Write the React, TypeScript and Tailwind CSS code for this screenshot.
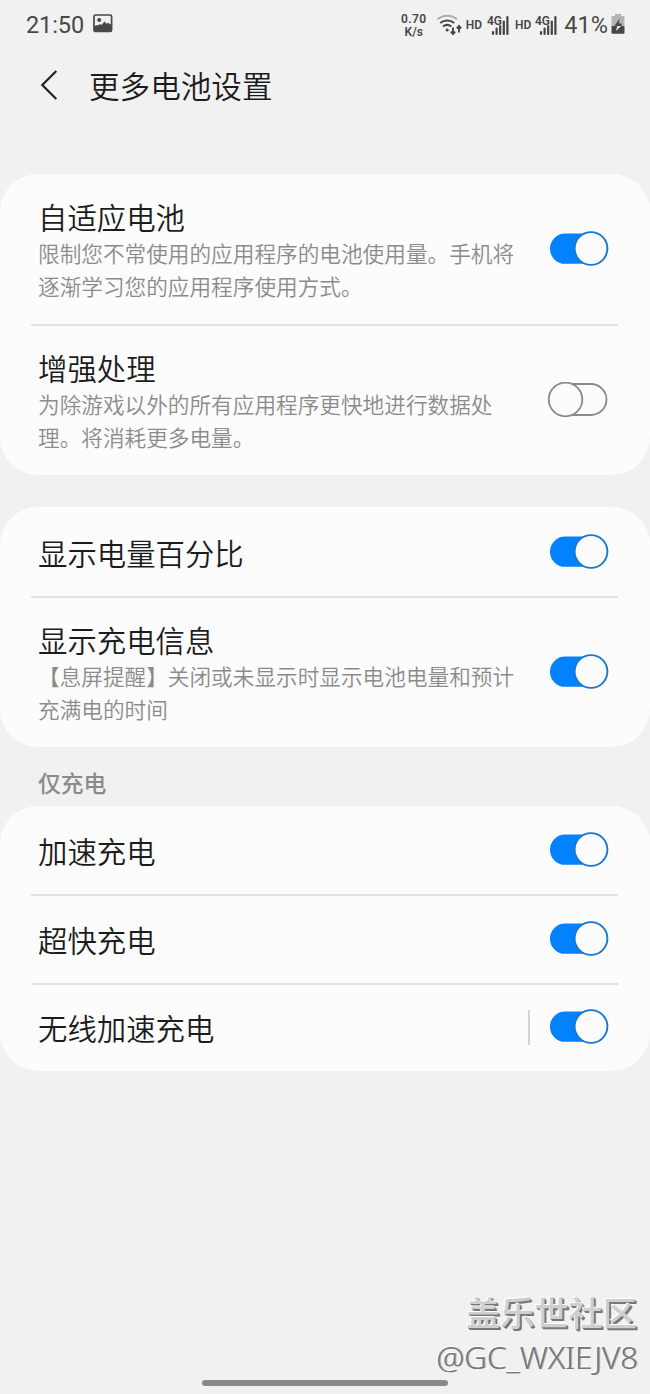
import clsx from "clsx";

interface ToggleProps {
    on: boolean;
}

interface RowProps {
    title: string;
    lines?: string[];
    on: boolean;
    className: string;
    split?: boolean;
}

function Toggle({ on }: ToggleProps) {
    return (
        <svg width="62" height="36" viewBox="0 0 62 36" className="shrink-0" role="switch" aria-checked={on}>
            {on ? (
                <>
                    <rect x="3" y="2.5" width="56" height="30.3" rx="15.1" fill="#0381fe" />
                    <circle cx="44" cy="17.5" r="16.4" fill="#fcfcfc" stroke="#1b78cc" strokeWidth="1.9" />
                </>
            ) : (
                <>
                    <rect x="4" y="2" width="55.5" height="31" rx="15.5" fill="#fcfcfc" stroke="#8a8a8a" strokeWidth="1.8" />
                    <circle cx="18.5" cy="17.5" r="16.8" fill="#fcfcfc" stroke="#8a8a8a" strokeWidth="1.8" />
                </>
            )}
        </svg>
    )
}

function Row({ title, lines, on, className, split }: RowProps) {
    return (
        <div className={clsx("flex items-center justify-between pl-[38px] pr-[41px]", className)}>
            <div>
                <h2 className="text-[29.4px] leading-10 text-[#1c1c1c]">{title}</h2>
                {lines && (
                    <p className="whitespace-nowrap text-[21.65px] leading-[33px] text-[#8b8b8b]">
                        {lines.map((line) => (
                            <span key={line} className="block">{line}</span>
                        ))}
                    </p>
                )}
            </div>
            <div className="flex items-center gap-[17px]">
                {split && <div className="h-[35px] w-[2px] bg-[#d4d4d4]" />}
                <Toggle on={on} />
            </div>
        </div>
    )
}

function Divider() {
    return <div className="ml-[31px] mr-8 h-[2px] shrink-0 bg-[#e2e2e2]" />
}

function Signal() {
    return (
        <svg width="23" height="24" viewBox="0 0 23 24" className="shrink-0">
            <text x="0" y="11.5" fontFamily="Roboto" fontWeight="600" fontSize="12" textLength="15" fill="#444">4G</text>
            <path d="M6 19v2M9.6 15.500v5.500M13.200 13v8M16.800 8.500v12.500M20.400 4v17" stroke="#444" strokeWidth="2.200" strokeLinecap="round" />
        </svg>
    )
}

function StatusBar() {
    return (
        <div className="flex h-[50px] items-center justify-between pl-[26px] pr-[25px] font-[Roboto] font-normal text-[#484848]">
            <div className="flex items-center">
                <span className="mt-[2px] text-[23.5px] leading-none tracking-[-0.1px]">21:50</span>
                <svg width="20" height="19" viewBox="0 0 20 19" className="ml-[9px] -mt-[3px]">
                    <rect x="1" y="1" width="17.6" height="16.5" rx="1.6" fill="none" stroke="#484848" strokeWidth="1.7" />
                    <circle cx="6.200" cy="6" r="2" fill="#484848" />
                    <path d="M1 12.500l2.500-1.500 1.500 .5 1.800-1.500 1.700 1 3-3.500 2 2.200 1.500-1L18.600 11v6.500H1z" fill="#484848" />
                </svg>
            </div>
            <div className="flex items-center">
                <div className="w-[26px] text-center text-[12px] font-semibold leading-none">
                    <div className="pb-px tracking-[0.4px]">0.70</div>
                    <div className="-mt-px pt-px">K/s</div>
                </div>
                <svg width="26" height="22" viewBox="0 0 26 22" fill="none" stroke="#484848" className="ml-[9px]">
                    <path d="M1.500 5.300a15 15 0 0 1 19.500 0" stroke="#adadad" strokeWidth="2" />
                    <path d="M4.200 9a10.700 10.700 0 0 1 14 0M7 12.500a6.800 6.800 0 0 1 8.400 0" strokeWidth="2" />
                    <circle cx="11.200" cy="16" r="1.500" fill="#484848" stroke="none" />
                    <path d="M17 13.500V20M14.800 17.600l2.200 2.400 2.200-2.400M23 18.500V12M20.800 14.400L23 12l2.200 2.400" strokeWidth="1.900" />
                </svg>
                <span className="ml-[4px] -mt-[1px] text-[12px] font-semibold">HD</span>
                <div className="ml-[5px]"><Signal /></div>
                <span className="ml-[5px] -mt-[1px] text-[12px] font-semibold">HD</span>
                <div className="ml-[4px]"><Signal /></div>
                <span className="ml-[6px] mt-px text-[23.500px] leading-none">41%</span>
                <svg width="14" height="20" viewBox="0 0 14 20" className="ml-[3px] -mt-[2px]">
                    <path d="M4 0h6v2h2.200c.8 0 1.300.5 1.300 1.300V12H.5V3.300C.5 2.500 1 2 1.800 2H4z" fill="#b4b4b4" />
                    <path d="M.5 12h13v6.500c0 .8-.5 1.300-1.300 1.300H1.800c-.8 0-1.300-.5-1.300-1.300z" fill="#484848" />
                    <path d="M8.500 4.500L3.500 12h6.800l.7-2.500H8z" fill="#484848" />
                    <path d="M6.300 12L5 17l5-5z" fill="#eeeeee" />
                </svg>
            </div>
        </div>
    )
}

export default function App() {
    return (
        <div lang="zh-CN" className="relative flex h-[1394px] w-[650px] flex-col overflow-hidden bg-[#f1f1f1] font-['Noto_Sans_CJK_SC',sans-serif] font-[350]">
            <StatusBar />

            <header className="flex h-[124px] items-start pl-[40px]">
                <svg width="20" height="32" viewBox="0 0 20 32" fill="none" className="mt-[19px]">
                    <path d="M16.300 2L2.300 16l14 14" stroke="#222" strokeWidth="2.200" />
                </svg>
                <h1 className="ml-[29px] mt-[15px] text-[30.6px] leading-10 text-[#1c1c1c]">更多电池设置</h1>
            </header>

            <section className="h-[301px] rounded-[38px] bg-[#fcfcfc]">
                <Row
                    className="h-[150px]"
                    title="自适应电池"
                    lines={["限制您不常使用的应用程序的电池使用量。手机将", "逐渐学习您的应用程序使用方式。"]}
                    on
                />
                <Divider />
                <Row
                    className="h-[148px]"
                    title="增强处理"
                    lines={["为除游戏以外的所有应用程序更快地进行数据处", "理。将消耗更多电量。"]}
                    on={false}
                />
            </section>

            <section className="mt-8 h-[240px] rounded-[38px] bg-[#fcfcfc]">
                <Row className="h-[89px]" title="显示电量百分比" on />
                <Divider />
                <Row
                    className="h-[147px]"
                    title="显示充电信息"
                    lines={["【息屏提醒】关闭或未显示时显示电池电量和预计", "充满电的时间"]}
                    on
                />
            </section>

            <h3 className="h-[59px] pl-[38px] pt-[19px] text-[22.8px] font-medium leading-[34px] text-[#8b8b8b]">仅充电</h3>

            <section className="h-[265px] rounded-[38px] bg-[#fcfcfc]">
                <Row className="h-[88px] pb-px" title="加速充电" on />
                <Divider />
                <Row className="h-[87px] pb-[2px]" title="超快充电" on />
                <Divider />
                <Row className="h-[86px] pb-[2px]" title="无线加速充电" on split />
            </section>

            {/* Community watermark */}
            <div className="absolute right-[12px] top-[1288px] flex flex-col items-end whitespace-nowrap">
                <span className="pr-px text-[34.200px] font-medium leading-[46px] text-[#cfcfcf] [text-shadow:-1px_-1px_0_#fff,1px_1px_0_#777,2px_2px_0_#777]">盖乐世社区</span>
                <span className="font-['Noto_Sans',sans-serif] text-[31.400px] font-light leading-[45px] text-[#777777] [text-shadow:-1px_-1px_0_#fff,1px_0_0_#a8a8a8]">@GC_WXIEJV8</span>
            </div>

            {/* Gesture bar */}
            <div className="absolute left-[202px] top-[1380px] h-[6px] w-[246px] rounded-full bg-[#8a8a8a]" />
        </div>
    )
}
